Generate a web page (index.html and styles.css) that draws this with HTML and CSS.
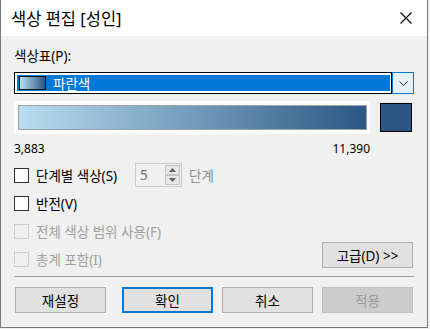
FILE: index.html
```html
<!DOCTYPE html>
<html lang="ko">
<head>
    <meta charset="UTF-8">
    <title>색상 편집 [성인]</title>
    <link rel="stylesheet" href="styles.css">
</head>
<body>

    <div class="dialog">
        <div class="titlebar">
            <span class="title">색상 편집 [성인]</span>
            <svg class="close" width="12" height="12" viewBox="0 0 12 12">
                <path d="M0.5 0.5 L11.5 11.5 M11.5 0.5 L0.5 11.5" stroke="#000" stroke-width="1.1" fill="none"/>
            </svg>
        </div>

        <div class="content">
            <div class="field-label">색상표(P):</div>

            <div class="combo">
                <div class="combo-field">
                    <div class="combo-sel">
                        <span class="mini-ramp"></span>파란색
                    </div>
                </div>
                <div class="combo-btn">
                    <svg width="9" height="5" viewBox="0 0 9 5">
                        <polyline points="0.5,0.5 4.5,4.5 8.5,0.5" stroke="#333" stroke-width="1" fill="none"/>
                    </svg>
                </div>
            </div>

            <div class="ramp-row">
                <div class="ramp-box"><div class="ramp"></div></div>
                <div class="swatch"></div>
            </div>

            <div class="range">
                <span>3,883</span>
                <span>11,390</span>
            </div>

            <div class="options">
                <div class="checks">
                    <div class="check-row">
                        <span class="box"></span>
                        <span class="step-label">단계별 색상(S)</span>
                        <div class="spin">
                            <span class="spin-value">5</span>
                            <div class="spin-btns">
                                <div class="spin-btn">
                                    <svg width="7" height="4" viewBox="0 0 7 4"><polygon points="0,4 7,4 3.5,0" fill="#606060"/></svg>
                                </div>
                                <div class="spin-btn">
                                    <svg width="7" height="4" viewBox="0 0 7 4"><polygon points="0,0 7,0 3.5,4" fill="#606060"/></svg>
                                </div>
                            </div>
                        </div>
                        <span class="step-unit">단계</span>
                    </div>
                    <div class="check-row">
                        <span class="box"></span>
                        <span>반전(V)</span>
                    </div>
                    <div class="check-row disabled">
                        <span class="box"></span>
                        <span>전체 색상 범위 사용(F)</span>
                    </div>
                    <div class="check-row disabled">
                        <span class="box"></span>
                        <span>총계 포함(I)</span>
                    </div>
                </div>
                <button class="btn adv-btn">고급(D) &gt;&gt;</button>
            </div>

            <div class="sep"></div>

            <div class="buttons">
                <button class="btn">재설정</button>
                <button class="btn default">확인</button>
                <button class="btn">취소</button>
                <button class="btn" disabled>적용</button>
            </div>
        </div>
    </div>

</body>
</html>
```

FILE: styles.css
```css
* {
    box-sizing: border-box;
}

body {
    margin: 0;
    background-color: #f0f0f0;
    font-family: "Noto Sans", "Noto Sans CJK KR", sans-serif;
    font-size: 13.5px;
    color: #000000;
}

.dialog {
    width: 428px;
    height: 328px;
    background-color: #f0f0f0;
    border: 1px solid #7a7a7a;
    border-top: none;
}

.titlebar {
    height: 36px;
    background-color: #ffffff;
    display: flex;
    align-items: center;
    justify-content: space-between;
    padding: 0 15px 0 10px;
}

.title {
    font-size: 16.5px;
}

.content {
    padding: 12px 13px 0;
}

.field-label {
    height: 16px;
    line-height: 16px;
}

/* 색상표 콤보박스 */
.combo {
    display: flex;
    height: 22px;
    margin-top: 8px;
}

.combo-field {
    flex: 1;
    border: 1px solid #000000;
    background-color: #ffffff;
    padding: 2px 1px 2px 2px;
}

.combo-sel {
    height: 100%;
    background-color: #0078d7;
    color: #ffffff;
    display: flex;
    align-items: center;
    padding-left: 2px;
}

.mini-ramp {
    width: 27px;
    height: 14px;
    border: 1px solid #111111;
    background: linear-gradient(to right, #b9def0, #2c5784);
    margin-right: 7px;
}

.combo-btn {
    width: 22px;
    border: 1px solid #0078d7;
    background-color: #e5f1fb;
    display: flex;
    align-items: center;
    justify-content: center;
}

/* 그라데이션 미리보기 */
.ramp-row {
    display: flex;
    margin-top: 7px;
}

.ramp-box {
    width: 356px;
    height: 33px;
    background-color: #ffffff;
    padding: 4px 3px 4px 4px;
}

.ramp {
    height: 100%;
    border: 1px solid #a0a0a0;
    background: linear-gradient(to right, #b9def0, #2c5784);
}

.swatch {
    width: 32px;
    height: 29px;
    margin: 2px 0 0 10px;
    border: 1px solid #000000;
    background-color: #2c5784;
}

.range {
    display: flex;
    justify-content: space-between;
    width: 356px;
    height: 16px;
    line-height: 16px;
    margin-top: 7px;
    font-size: 12px;
}

/* 옵션 */
.options {
    display: flex;
    justify-content: space-between;
    margin-top: 4px;
}

.check-row {
    display: flex;
    align-items: center;
    height: 28px;
}

.box {
    width: 15px;
    height: 15px;
    border: 1px solid #333333;
    background-color: #ffffff;
    margin-right: 7px;
}

.disabled {
    color: #a0a0a0;
}

.disabled .box {
    border-color: #cccccc;
    background-color: #f0f0f0;
}

.step-label {
    width: 99px;
}

.spin {
    width: 47px;
    height: 24px;
    border: 1px solid #cccccc;
    display: flex;
    justify-content: space-between;
    align-items: center;
    padding: 1px 1px 1px 4px;
    color: #6d6d6d;
}

.spin-btns {
    width: 15px;
    height: 100%;
    display: flex;
    flex-direction: column;
}

.spin-btn {
    flex: 1;
    border: 1px solid #c4c4c4;
    background-color: #e6e6e6;
    display: flex;
    align-items: center;
    justify-content: center;
}

.step-unit {
    margin-left: 7px;
    color: #8d8d8d;
}

/* 버튼 */
.btn {
    width: 91px;
    height: 26px;
    padding: 0;
    font-family: inherit;
    font-size: 13.5px;
    color: #000000;
    background-color: #e1e1e1;
    border: 1px solid #adadad;
}

.btn.default {
    border: 2px solid #0078d7;
}

.btn:disabled {
    background-color: #cccccc;
    border-color: #bfbfbf;
    color: #9a9a9a;
}

.adv-btn {
    align-self: flex-end;
    margin: 0 1px 5px 0;
}

.sep {
    height: 1px;
    background-color: #a0a0a0;
    margin-top: 3px;
}

.buttons {
    display: flex;
    gap: 9px;
    margin-top: 10px;
    padding-left: 1px;
}

.buttons .btn:first-child {
    margin-right: 7px;
}
```
